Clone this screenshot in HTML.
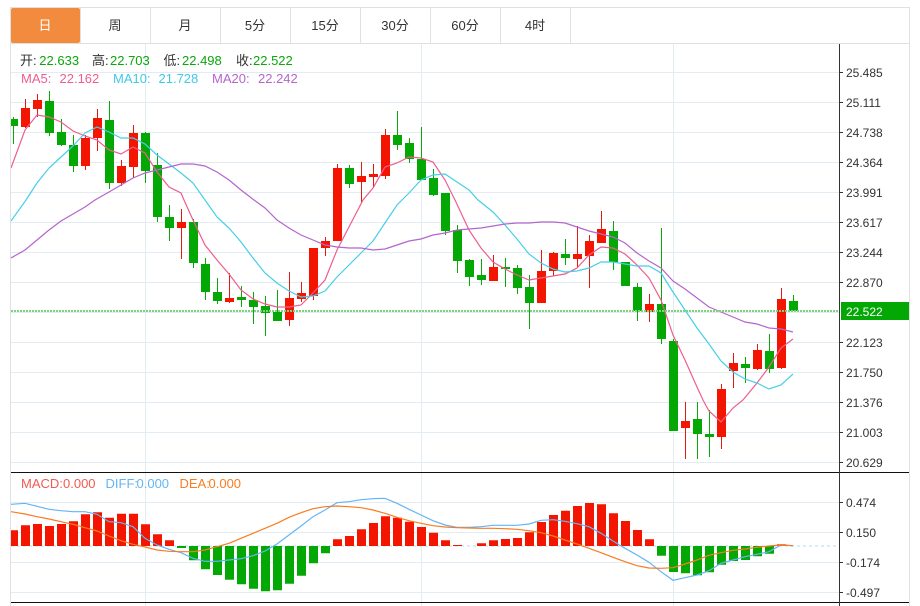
<!DOCTYPE html>
<html>
<head>
<meta charset="utf-8">
<style>
html,body{margin:0;padding:0;background:#fff}
svg{display:block}
text{font-family:"Liberation Sans","Noto Sans CJK SC",sans-serif}
.t{font-size:13px;fill:#333;text-anchor:middle}
.a{font-size:12px;fill:#333}
.i{font-size:13px}
.k{fill:#333}.g{fill:#0aa60a}
</style>
</head>
<body>
<svg width="920" height="606" viewBox="0 0 920 606" xmlns="http://www.w3.org/2000/svg">
<defs><clipPath id="c"><rect x="11" y="44" width="828" height="562"/></clipPath></defs>
<rect width="920" height="606" fill="#fff"/>
<!-- tabs -->
<rect x="11" y="8" width="69" height="35" rx="2" fill="#f38b3f"/>
<path d="M10.5 7V606M909.5 7V606M10 7.5H910M10 43.5H910M80.5 8V43M150.5 8V43M220.5 8V43M290.5 8V43M360.5 8V43M430.5 8V43M500.5 8V43M570.5 8V43" stroke="#e0e0e0" fill="none"/>
<text class="t" x="45" y="30" style="fill:#fff">日</text>
<text class="t" x="115" y="30">周</text>
<text class="t" x="185" y="30">月</text>
<text class="t" x="255" y="30">5分</text>
<text class="t" x="325" y="30">15分</text>
<text class="t" x="395" y="30">30分</text>
<text class="t" x="465" y="30">60分</text>
<text class="t" x="535" y="30">4时</text>
<!-- grid -->
<path d="M11 72.5H839M11 102.5H839M11 132.5H839M11 162.5H839M11 192.5H839M11 222.5H839M11 252.5H839M11 282.5H839M11 312.5H839M11 342.5H839M11 372.5H839M11 402.5H839M11 432.5H839M11 462.5H839M11 502.5H839M11 532.5H839M11 562.5H839M11 592.5H839M145.5 44V606M421.5 44V606M673.5 44V606" stroke="#e3ecf3" fill="none"/>
<g clip-path="url(#c)">
<!-- candle wicks -->
<path fill="none" stroke="#0aa60a" shape-rendering="crispEdges" d="M13.5 117V144M49.5 91V136M61.5 119V146M73.5 135V172M109.5 101V189M145.5 132V183M157.5 153V222M169.5 205V241M193.5 219V268M205.5 258V300M217.5 278V304M241.5 286V307M253.5 292V324M265.5 296V336M277.5 290V321M349.5 165V188M397.5 111V150M409.5 138V163M421.5 127V180M433.5 169V196M445.5 193V235M457.5 225V273M469.5 259V286M481.5 259V285M505.5 258V287M517.5 265V294M529.5 275V329M565.5 239V265M613.5 221V270M625.5 262V286M637.5 283V321M661.5 228V344M673.5 339V431M697.5 402V459M709.5 410V457M745.5 357V383M769.5 334V373M793.5 295V311"/>
<path fill="none" stroke="#e01a10" shape-rendering="crispEdges" d="M25.5 99V128M37.5 94V117M85.5 135V170M97.5 109V151M121.5 160V186M133.5 125V178M181.5 209V259M229.5 273V303M289.5 272V326M301.5 282V302M313.5 248V300M325.5 237V256M337.5 164V241M361.5 162V203M373.5 164V188M385.5 129V179M493.5 255V281M541.5 250V303M553.5 252V276M577.5 226V268M589.5 235V288M601.5 211V243M649.5 294V322M685.5 402V459M721.5 384V449M733.5 353V388M757.5 344V370M781.5 288V369"/>
<!-- candle bodies -->
<path fill="#04a804" d="M11 119h7V126h-7zM45 101h9V133h-9zM57 132h9V145h-9zM69 145h9V166h-9zM105 120h9V183h-9zM141 133h9V171h-9zM153 165h9V217h-9zM165 217h9V228h-9zM189 222h9V263h-9zM201 264h9V292h-9zM213 292h9V301h-9zM237 297h9V300h-9zM249 300h9V307h-9zM261 306h9V313h-9zM273 312h9V321h-9zM345 168h9V184h-9zM393 135h9V145h-9zM405 143h9V159h-9zM417 159h9V180h-9zM429 178h9V195h-9zM441 193h9V231h-9zM453 230h9V261h-9zM465 260h9V277h-9zM477 275h9V280h-9zM501 267h9V269h-9zM513 268h9V288h-9zM525 287h9V303h-9zM561 254h9V258h-9zM609 231h9V262h-9zM621 262h9V286h-9zM633 287h9V311h-9zM657 304h9V339h-9zM669 341h9V431h-9zM693 419h9V434h-9zM705 434h9V437h-9zM741 364h9V368h-9zM765 351h9V369h-9zM789 301h9V311h-9z"/>
<path fill="#f31500" d="M21 108h9V127h-9zM33 100h9V109h-9zM81 138h9V166h-9zM93 118h9V138h-9zM117 166h9V183h-9zM129 133h9V167h-9zM177 222h9V228h-9zM225 298h9V302h-9zM285 298h9V320h-9zM297 293h9V299h-9zM309 248h9V296h-9zM321 241h9V248h-9zM333 168h9V241h-9zM357 176h9V182h-9zM369 174h9V177h-9zM381 135h9V176h-9zM489 267h9V281h-9zM537 271h9V303h-9zM549 253h9V271h-9zM573 254h9V259h-9zM585 241h9V256h-9zM597 229h9V243h-9zM645 304h9V312h-9zM681 421h9V428h-9zM717 389h9V437h-9zM729 363h9V371h-9zM753 350h9V369h-9zM777 299h9V368h-9z"/>
<!-- MA lines -->
<polyline fill="none" stroke="#ef5d8f" stroke-width="1.2" points="11,168 25,130 37,115 49,117 61,122 73,131 85,136 97,140 109,150 121,154 133,147 145,153 157,172 169,187 181,193 184,200 193,220 205,245 217,260 229,274 241,290 253,299 265,304 277,307 289,307 301,305 313,293 325,280 337,250 349,227 363,200 373,188 385,167 397,163 409,157 421,158 433,162 445,180 455,200 469,230 481,248 493,262 505,269 517,275 529,280 541,278 553,276 565,274 577,268 589,255 601,247 613,248 625,254 637,265 649,278 661,300 673,335 685,360 697,387 703,400 709,411 721,422 733,408 743,400 757,383 769,367 781,348 793,339"/>
<polyline fill="none" stroke="#45cfe8" stroke-width="1.2" points="11,221 26,200 37,183 49,168 61,157 73,146 85,133 97,127 109,132 121,138 133,138 145,144 157,155 169,164 181,173 193,183 205,200 217,217 229,228 241,242 253,258 265,273 277,283 289,291 301,297 313,296 325,291 337,277 349,265 361,253 373,241 385,223 397,205 409,193 421,180 433,175 445,174 457,182 469,190 478,200 493,212 505,225 517,239 529,254 541,263 553,269 565,272 577,271 589,268 601,262 613,262 625,264 637,266 649,266 661,273 673,292 685,310 697,328 709,344 721,361 733,372 745,379 757,383 769,389 781,385 793,374"/>
<polyline fill="none" stroke="#b565cc" stroke-width="1.2" points="11,258 25,250 37,240 49,230 61,221 73,214 85,207 95,200 109,192 121,185 133,178 145,173 157,170 169,167 181,164 193,164 205,166 217,172 229,180 241,190 254,200 265,208 277,220 289,228 301,235 313,240 325,245 337,247 349,248 361,248 373,250 385,249 397,245 409,241 421,239 433,235 445,233 457,230 469,229 481,228 493,226 505,224 517,223 529,223 541,222 553,222 565,223 577,227 589,231 601,234 613,237 625,243 637,253 649,261 661,268 673,281 685,289 697,298 709,307 721,312 733,317 745,322 757,324 769,328 781,329 793,332"/>
<!-- MACD zero line -->
<path d="M11 546H836" stroke="#bfe3f1" stroke-width="1.2" stroke-dasharray="3 3" fill="none"/>
<!-- MACD bars -->
<path fill="#f31500" d="M11 530.3h7V546h-7zM21 525.3h9V546h-9zM33 524h9V546h-9zM45 526h9V546h-9zM57 524h9V546h-9zM69 521.3h9V546h-9zM81 514.3h9V546h-9zM93 512.3h9V546h-9zM105 517.7h9V546h-9zM117 513.7h9V546h-9zM129 513.7h9V546h-9zM141 524.3h9V546h-9zM153 534.3h9V546h-9zM165 540.3h9V546h-9zM333 539.3h9V546h-9zM345 536h9V546h-9zM357 529.3h9V546h-9zM369 523h9V546h-9zM381 516.3h9V546h-9zM393 517.7h9V546h-9zM405 521.7h9V546h-9zM417 527h9V546h-9zM429 532.7h9V546h-9zM441 540.3h9V546h-9zM453 545h9V546h-9zM477 543.3h9V546h-9zM489 540.3h9V546h-9zM501 539h9V546h-9zM513 538h9V546h-9zM525 532.3h9V546h-9zM537 522h9V546h-9zM549 515h9V546h-9zM561 510.7h9V546h-9zM573 506h9V546h-9zM585 503h9V546h-9zM597 504.3h9V546h-9zM609 513.3h9V546h-9zM621 521h9V546h-9zM633 530h9V546h-9zM645 539.3h9V546h-9zM777 544.3h9V546h-9z"/>
<path fill="#04a804" d="M177 546h9V548h-9zM189 546h9V560.3h-9zM201 546h9V569.3h-9zM213 546h9V575h-9zM225 546h9V579.7h-9zM237 546h9V584.3h-9zM249 546h9V588.7h-9zM261 546h9V591.3h-9zM273 546h9V590.3h-9zM285 546h9V583.7h-9zM297 546h9V575.7h-9zM309 546h9V563.3h-9zM321 546h9V553.3h-9zM657 546h9V555.7h-9zM669 546h9V572h-9zM681 546h9V573.3h-9zM693 546h9V575.3h-9zM705 546h9V572.3h-9zM717 546h9V564.7h-9zM729 546h9V561h-9zM741 546h9V560h-9zM753 546h9V556.3h-9zM765 546h9V553.7h-9z"/>
<!-- MACD lines -->
<polyline fill="none" stroke="#64b5f6" stroke-width="1.2" points="11,504.3 25,503.3 37,506.3 49,509.3 61,510.7 73,511.7 85,511.7 97,514.3 109,521.7 121,522.7 133,526.7 145,538.3 157,545 169,549.3 181,552.7 193,558.3 205,561.3 217,561.3 229,560 241,558.7 253,555.7 265,551 277,544 289,535 301,526 313,516.7 325,510 337,502.7 349,501.7 361,499.7 373,498.7 385,498.3 397,503.3 409,509.3 421,515 433,520.7 445,525 457,527.3 469,527.3 481,526.7 493,525.3 505,525.3 517,525.3 529,524 541,520.3 553,519.7 565,521.3 577,523.7 589,526.7 601,533.3 613,541 625,548.3 637,555 649,562.3 661,571.7 673,580.3 685,577.7 697,575 709,570.7 721,563.3 733,560 745,556.7 757,554.3 769,551.7 781,545 793,545.7"/>
<polyline fill="none" stroke="#f97c21" stroke-width="1.2" points="11,511.7 25,514 37,516.7 49,519 61,521.7 73,524.3 85,527.7 97,531 109,536 121,540.7 133,544.3 145,547 157,550 169,551.3 181,551.7 193,551.7 205,550 217,546.7 229,543.3 241,538.3 253,533.3 265,528.3 277,523.3 289,517.3 301,512.7 313,508.7 325,506.7 337,506 349,506.7 361,507.7 373,510 385,513.3 397,517.3 409,520.7 421,523.3 433,525.7 445,527 457,527.7 469,528 481,528.3 493,528.3 505,528.7 517,529.3 529,530.7 541,532.7 553,536 565,540 577,544 589,548.3 601,552.7 613,557.3 625,561.7 637,565.7 649,568 661,568.3 673,567.7 685,564 697,560 709,555.3 721,552.7 733,550.3 745,549 757,547.3 769,546 781,545 793,545.7"/>
<!-- last price dotted line -->
<path d="M11 311H840" stroke="#7ed47e" stroke-width="2" stroke-dasharray="2 1" fill="none"/>
</g>
<!-- frames and axis -->
<path d="M11 472.5H909M11 602.5H909" stroke="#111" fill="none"/>
<path d="M839.5 44V606" stroke="#333" fill="none"/>
<path d="M840 72.5h3M840 102.5h3M840 132.5h3M840 162.5h3M840 192.5h3M840 222.5h3M840 252.5h3M840 282.5h3M840 342.5h3M840 372.5h3M840 402.5h3M840 432.5h3M840 462.5h3M840 502.5h3M840 532.5h3M840 562.5h3M840 592.5h3" stroke="#333" fill="none"/>
<rect x="841" y="302" width="68" height="18" fill="#04a804"/>
<text class="a" x="846" y="77">25.485</text>
<text class="a" x="846" y="107">25.111</text>
<text class="a" x="846" y="137">24.738</text>
<text class="a" x="846" y="167">24.364</text>
<text class="a" x="846" y="197">23.991</text>
<text class="a" x="846" y="227">23.617</text>
<text class="a" x="846" y="257">23.244</text>
<text class="a" x="846" y="287">22.870</text>
<text class="a" x="846" y="316" style="fill:#fff">22.522</text>
<text class="a" x="846" y="347">22.123</text>
<text class="a" x="846" y="377">21.750</text>
<text class="a" x="846" y="407">21.376</text>
<text class="a" x="846" y="437">21.003</text>
<text class="a" x="846" y="467">20.629</text>
<text class="a" x="846" y="507">0.474</text>
<text class="a" x="846" y="537">0.150</text>
<text class="a" x="846" y="567">-0.174</text>
<text class="a" x="846" y="597">-0.497</text>
<!-- info rows -->
<text class="i k" x="20" y="65">开:</text><text class="i g" x="39.3" y="65">22.633</text>
<text class="i k" x="92" y="65">高:</text><text class="i g" x="110" y="65">22.703</text>
<text class="i k" x="163.5" y="65">低:</text><text class="i g" x="182" y="65">22.498</text>
<text class="i k" x="236" y="65">收:</text><text class="i g" x="253" y="65">22.522</text>
<text class="i" x="21" y="83" fill="#ef5d8f">MA5:</text><text class="i" x="59.5" y="83" fill="#ef5d8f">22.162</text>
<text class="i" x="113" y="83" fill="#3fcae6">MA10:</text><text class="i" x="158.5" y="83" fill="#3fcae6">21.728</text>
<text class="i" x="212" y="83" fill="#b565cc">MA20:</text><text class="i" x="258" y="83" fill="#b565cc">22.242</text>
<text class="i" x="21" y="488" fill="#f15a4f">MACD:</text><text class="i" x="63" y="488" fill="#f15a4f">0.000</text>
<text class="i" x="105.5" y="488" fill="#64b5f6">DIFF:</text><text class="i" x="136.5" y="488" fill="#64b5f6">0.000</text>
<text class="i" x="179.5" y="488" fill="#f97c21">DEA:</text><text class="i" x="208.5" y="488" fill="#f97c21">0.000</text>
</svg>
</body>
</html>
